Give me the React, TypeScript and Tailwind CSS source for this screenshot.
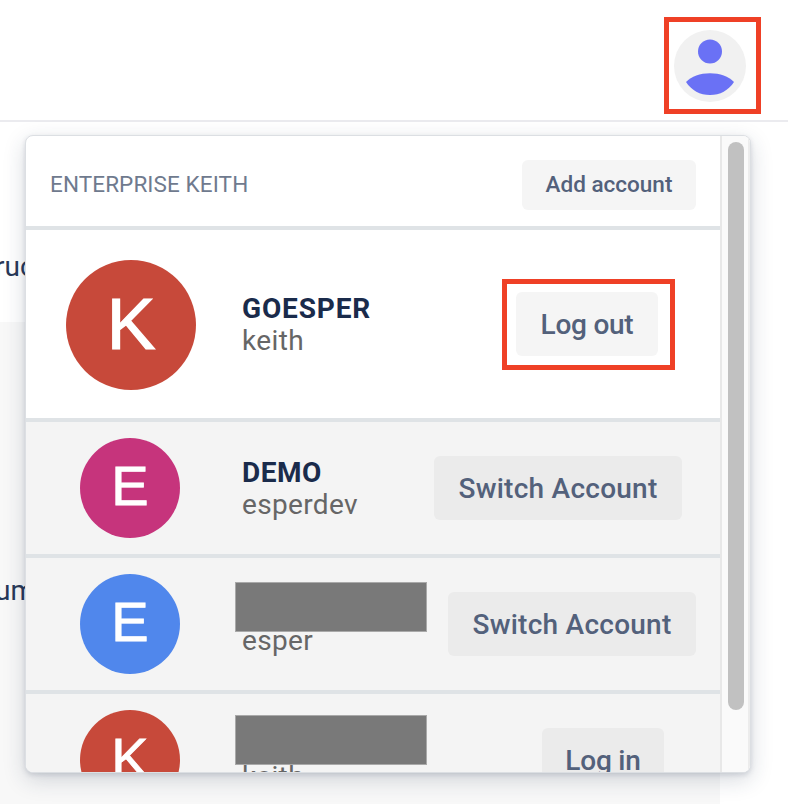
type Account = {
  letter: string;
  name: string;
  user: string;
  action: string;
  color: string;
  button: string;
  label: string;
  redacted?: string;
};

const accounts: Account[] = [
  {
    letter: 'E',
    name: 'DEMO',
    user: 'esperdev',
    action: 'Switch Account',
    color: 'bg-[#c6347c]',
    button: 'mr-[38px] w-[248px]',
    label: 'tracking-[0.25px]',
  },
  {
    letter: 'E',
    name: '',
    user: 'esper',
    action: 'Switch Account',
    color: 'bg-[#5087ec]',
    button: 'mr-6 w-[248px]',
    label: 'tracking-[0.25px]',
    redacted: 'top-[24px]',
  },
  {
    letter: 'K',
    name: '',
    user: 'keith',
    action: 'Log in',
    color: 'bg-[#c7493a]',
    button: 'mr-14 w-[122px]',
    label: 'tracking-[-0.2px]',
    redacted: 'top-[21px]',
  },
];

function UserIcon() {
  return (
    <svg viewBox="0 0 72 72" className="mt-2 ml-[5px] size-[72px]">
      <circle cx="36" cy="36" r="36" fill="#f1f1f1" />
      <circle cx="36" cy="21.5" r="12" fill="#6a71f5" />
      <path d="M12 52C17.5 46 26 43.2 36 43.2S54.5 46 60 52C54.5 60.5 46 65 36 65S17.5 60.5 12 52Z" fill="#6a71f5" />
    </svg>
  );
}

function AccountRow({ account }: { account: Account }) {
  return (
    <div className="relative flex h-[136px] shrink-0 items-center border-b-4 border-[#dfe3e6] bg-[#f4f4f4]">
      <div className={`ml-[54px] flex size-[100px] items-center justify-center rounded-full pb-1 ${account.color}`}>
        <span className="font-['Liberation_Sans'] text-[56px] leading-none text-white [-webkit-text-stroke:0.8px_white]">{account.letter}</span>
      </div>
      <div className="ml-[62px] flex grow flex-col pt-0.5">
        <span className="h-8 text-[28px] leading-8 font-bold tracking-[0.5px] text-[#1a2b4b]">{account.name}</span>
        <span className="h-8 text-[28px] leading-8 tracking-[0.35px] text-[#666]">{account.user}</span>
      </div>
      <button className={`flex h-16 items-center justify-center rounded-md bg-[#ebebeb] pt-0.5 text-[28px] font-medium whitespace-nowrap text-[#53617b] ${account.button}`}>
        <span className={account.label}>{account.action}</span>
      </button>
      {account.redacted && (
        <div className={`absolute left-[209px] h-[50px] w-[192px] border border-[#a9a9a9] bg-[#797979] ${account.redacted}`} />
      )}
    </div>
  );
}

function AccountMenu() {
  return (
    <div className="absolute top-[135px] left-[25px] flex h-[638px] w-[726px] overflow-hidden rounded-lg border border-[#dcdfe3] bg-white shadow-[0_7px_22px_rgba(35,50,75,0.18),0_2px_5px_rgba(35,50,75,0.14)]">
      <div className="flex w-[694px] shrink-0 flex-col overflow-hidden">
        <div className="flex h-[94px] shrink-0 items-center justify-between border-b-4 border-[#dfe3e6] pr-6 pl-6">
          <span className="mt-[7px] text-[22.5px] tracking-[0.1px] text-[#6f7a8e]">ENTERPRISE KEITH</span>
          <button className="mt-2 flex h-[50px] w-[174px] items-center justify-center rounded-md bg-[#f5f5f5] text-[22.5px] font-medium text-[#53617b]">
            <span>Add account</span>
          </button>
        </div>
        <div className="flex h-48 shrink-0 items-center border-b-4 border-[#dfe3e6] bg-white pt-0.5">
          <div className="ml-10 flex size-[130px] items-center justify-center rounded-full bg-[#c7493a] pb-1">
            <span className="font-['Liberation_Sans'] text-[73px] leading-none text-white [-webkit-text-stroke:1.2px_white]">K</span>
          </div>
          <div className="ml-[46px] flex grow flex-col">
            <span className="text-[28px] leading-8 font-bold tracking-[0.85px] text-[#1a2b4b]">GOESPER</span>
            <span className="text-[28px] leading-8 tracking-[0.4px] text-[#666]">keith</span>
          </div>
          <div className="mr-[45px] mb-0.5 flex h-[91px] w-[173px] items-center border-[5px] border-[#ef4026] pl-[9px]">
            <button className="flex h-16 w-[142px] items-center justify-center rounded-md bg-[#f5f5f5] pt-0.5 text-[28px] font-medium text-[#53617b]">
              <span className="tracking-[-0.25px]">Log out</span>
            </button>
          </div>
        </div>
        {accounts.map((account, index) => (
          <AccountRow key={index} account={account} />
        ))}
      </div>
      <div className="flex grow justify-start border-r-2 border-l-2 border-l-[#e8e8e8] border-r-[#ececec] bg-[#fafafa] pt-1.5 pl-1.5">
        <div className="h-[568px] w-4 rounded-full bg-[#c1c1c1]" />
      </div>
    </div>
  );
}

export default function App() {
  return (
    <div className="relative h-[804px] w-[788px] overflow-hidden bg-white font-[Roboto,'Noto_Sans',sans-serif]">
      <header className="flex h-[122px] items-start justify-end border-b-2 border-[#ebebef] pt-[17px] pr-[27px]">
        <div className="flex size-[97px] items-start border-[5px] border-[#ef4026]">
          <UserIcon />
        </div>
      </header>
      <main className="text-[28px] leading-8 text-[#273858]">
        <div className="flex h-[200px] w-[720px] items-start pt-[129px]">
          <span className="-ml-[5px]">ruc</span>
        </div>
        <div className="flex h-[482px] w-[720px] items-start bg-[#f8f8f8] pt-[253px]">
          <span className="-ml-[5px]">um</span>
        </div>
      </main>
      <AccountMenu />
    </div>
  );
}
